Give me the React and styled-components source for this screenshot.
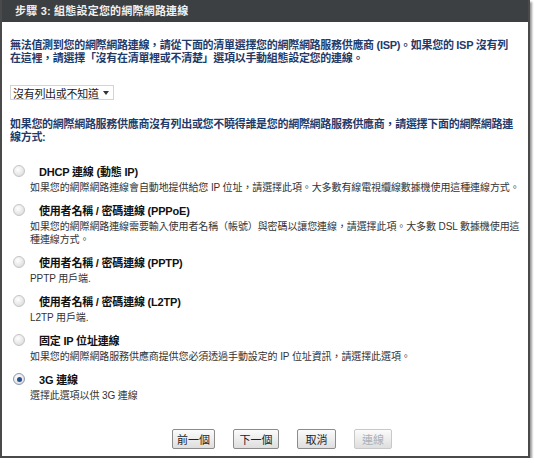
import styled, { createGlobalStyle } from "styled-components";

const GlobalStyle = createGlobalStyle`
  body {
    margin: 0;
    background: #ffffff;
    font-family: "Liberation Sans", "Noto Sans CJK TC", sans-serif;
  }
`;

const Frame = styled.div`
  width: 526px;
  height: 456px;
  border: 2px solid #4a4a4a;
  border-top: 0;
  background: #ffffff;
  box-shadow: 2px 2px 2px #9a9a9a;
  display: flex;
  flex-direction: column;
`;

const TitleBar = styled.div`
  height: 22px;
  background: #3d4042;
  color: #f0f0f0;
  font-size: 11px;
  font-weight: bold;
  line-height: 22px;
  padding-left: 13px;
  letter-spacing: 0.2px;
`;

const Content = styled.div`
  padding: 17px 8px 0 8px;
  display: flex;
  flex-direction: column;
`;

const Lead = styled.p`
  margin: ${(p) => p.$top || 0}px 0 0 0;
  color: #1f3b6b;
  font-size: 11px;
  font-weight: bold;
  line-height: 13px;
  letter-spacing: -0.3px;
  white-space: nowrap;
`;

const FakeSelect = styled.div`
  margin-top: 20px;
  width: 104px;
  height: 15px;
  border: 1px solid #d4d4d4;
  box-sizing: border-box;
  display: flex;
  align-items: center;
  justify-content: space-between;
  padding: 0 4px 0 2px;
  font-size: 11px;
  color: #222;
  letter-spacing: -0.3px;
`;

const Caret = styled.span`
  width: 0;
  height: 0;
  border-left: 3px solid transparent;
  border-right: 3px solid transparent;
  border-top: 4px solid #333;
`;

const Options = styled.div`
  margin-top: 19px;
  display: flex;
  flex-direction: column;
  gap: 8px;
`;

const Option = styled.div`
  display: flex;
  flex-direction: column;
`;

const OptionHead = styled.div`
  height: 16px;
  display: flex;
  align-items: center;
`;

const Radio = styled.span`
  margin-left: 3px;
  width: 12px;
  height: 12px;
  border-radius: 50%;
  box-sizing: border-box;
  border: 1px solid ${(p) => (p.$on ? "#8a9ab5" : "#c4c4c4")};
  background: radial-gradient(circle at 40% 35%, #ffffff 0%, #e6e6e6 60%, #d2d2d2 100%);
  display: flex;
  align-items: center;
  justify-content: center;
  &::after {
    content: "";
    display: ${(p) => (p.$on ? "block" : "none")};
    width: 5px;
    height: 5px;
    border-radius: 50%;
    background: #2a4f8f;
  }
`;

const OptionTitle = styled.span`
  margin-left: 14px;
  font-size: 11px;
  font-weight: bold;
  color: #111;
  letter-spacing: -0.2px;
`;

const Desc = styled.div`
  margin-top: 2px;
  padding-left: 20px;
  font-size: 10px;
  line-height: 13px;
  color: #333;
  letter-spacing: -0.1px;
  white-space: nowrap;
`;

const Buttons = styled.div`
  margin-top: 27px;
  padding-left: 162px;
  display: flex;
  gap: 18px;
`;

const Button = styled.button`
  width: ${(p) => p.$w}px;
  height: 20px;
  padding: 0;
  border: 1px solid ${(p) => (p.disabled ? "#c8c8c8" : "#8c8c8c")};
  border-radius: 2px;
  background: linear-gradient(#fbfbfb, #dedede);
  color: ${(p) => (p.disabled ? "#a8b0b8" : "#222")};
  font-family: "Liberation Sans", "Noto Sans CJK TC", sans-serif;
  font-size: 11px;
`;

const options = [
  {
    title: "DHCP 連線 (動態 IP)",
    desc: ["如果您的網際網路連線會自動地提供給您 IP 位址，請選擇此項。大多數有線電視纜線數據機使用這種連線方式。"],
  },
  {
    title: "使用者名稱 / 密碼連線 (PPPoE)",
    desc: [
      "如果您的網際網路連線需要輸入使用者名稱（帳號）與密碼以讓您連線，請選擇此項。大多數 DSL 數據機使用這",
      "種連線方式。",
    ],
  },
  { title: "使用者名稱 / 密碼連線 (PPTP)", desc: ["PPTP 用戶端."] },
  { title: "使用者名稱 / 密碼連線 (L2TP)", desc: ["L2TP 用戶端."] },
  {
    title: "固定 IP 位址連線",
    desc: ["如果您的網際網路服務供應商提供您必須透過手動設定的 IP 位址資訊，請選擇此選項。"],
  },
  { title: "3G 連線", desc: ["選擇此選項以供 3G 連線"], on: true },
];

export default function App() {
  return (
    <>
      <GlobalStyle />
      <Frame>
        <TitleBar>步驟 3: 組態設定您的網際網路連線</TitleBar>
        <Content>
          <Lead>
            無法值測到您的網際網路連線，請從下面的清單選擇您的網際網路服務供應商 (ISP)。如果您的 ISP 沒有列
            <br />
            在這裡，請選擇「沒有在清單裡或不清楚」選項以手動組態設定您的連線。
          </Lead>
          <FakeSelect>
            沒有列出或不知道
            <Caret />
          </FakeSelect>
          <Lead $top={18}>
            如果您的網際網路服務供應商沒有列出或您不曉得誰是您的網際網路服務供應商，請選擇下面的網際網路連
            <br />
            線方式:
          </Lead>
          <Options>
            {options.map((o) => (
              <Option key={o.title}>
                <OptionHead>
                  <Radio $on={o.on} />
                  <OptionTitle>{o.title}</OptionTitle>
                </OptionHead>
                <Desc>
                  {o.desc.map((d) => (
                    <div key={d}>{d}</div>
                  ))}
                </Desc>
              </Option>
            ))}
          </Options>
          <Buttons>
            <Button $w={43}>前一個</Button>
            <Button $w={46}>下一個</Button>
            <Button $w={39}>取消</Button>
            <Button $w={38} disabled>
              連線
            </Button>
          </Buttons>
        </Content>
      </Frame>
    </>
  );
}
